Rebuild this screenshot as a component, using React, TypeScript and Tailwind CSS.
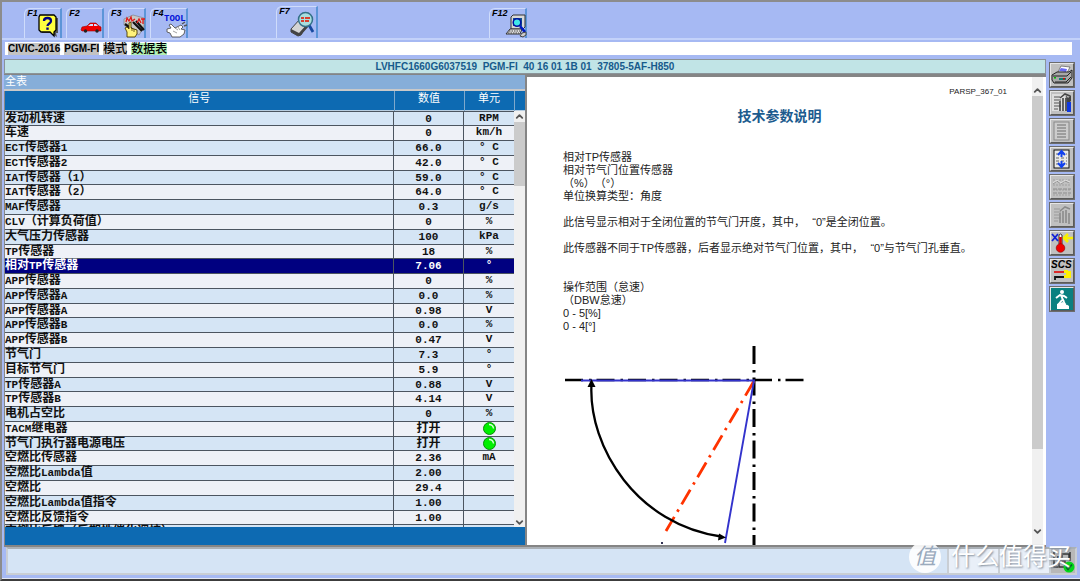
import { ReactNode } from 'react';
import clsx from 'clsx';
import { ChevronDown, ChevronUp } from 'lucide-react';

interface Signal {
    name: string;
    value: string;
    unit?: string;
    lamp?: boolean;
}

const signals: Signal[] = [
    { name: '发动机转速', value: '0', unit: 'RPM' },
    { name: '车速', value: '0', unit: 'km/h' },
    { name: 'ECT传感器1', value: '66.0', unit: '° C' },
    { name: 'ECT传感器2', value: '42.0', unit: '° C' },
    { name: 'IAT传感器（1）', value: '59.0', unit: '° C' },
    { name: 'IAT传感器（2）', value: '64.0', unit: '° C' },
    { name: 'MAF传感器', value: '0.3', unit: 'g/s' },
    { name: 'CLV（计算负荷值）', value: '0', unit: '%' },
    { name: '大气压力传感器', value: '100', unit: 'kPa' },
    { name: 'TP传感器', value: '18', unit: '%' },
    { name: '相对TP传感器', value: '7.06', unit: '°' },
    { name: 'APP传感器', value: '0', unit: '%' },
    { name: 'APP传感器A', value: '0.0', unit: '%' },
    { name: 'APP传感器A', value: '0.98', unit: 'V' },
    { name: 'APP传感器B', value: '0.0', unit: '%' },
    { name: 'APP传感器B', value: '0.47', unit: 'V' },
    { name: '节气门', value: '7.3', unit: '°' },
    { name: '目标节气门', value: '5.9', unit: '°' },
    { name: 'TP传感器A', value: '0.88', unit: 'V' },
    { name: 'TP传感器B', value: '4.14', unit: 'V' },
    { name: '电机占空比', value: '0', unit: '%' },
    { name: 'TACM继电器', value: '打开', lamp: true },
    { name: '节气门执行器电源电压', value: '打开', lamp: true },
    { name: '空燃比传感器', value: '2.36', unit: 'mA' },
    { name: '空燃比Lambda值', value: '2.00' },
    { name: '空燃比', value: '29.4' },
    { name: '空燃比Lambda值指令', value: '1.00' },
    { name: '空燃比反馈指令', value: '1.00' },
    { name: '空燃比反馈（后期性催化调校）', value: '1.00' },
];

const SELECTED = 10;

// Latin runs use a half-width face next to the full-width characters
function Mixed({ text }: { text: string }) {
    return (
        <>
            {text.split(/([A-Za-z0-9.]+)/).map((part, i) =>
                i % 2 ? (
                    <span key={i} className="font-['Liberation_Mono',monospace] text-[11px]">{part}</span>
                ) : (
                    part
                )
            )}
        </>
    );
}

/* ---------- toolbar icons ---------- */

function HelpIcon() {
    return (
        <svg width="22" height="24" viewBox="0 0 22 24">
            <path d="M4 4h16v15h-2l1 4-6-4H4z" fill="#555" />
            <path d="M2 1h14l2 2v13l-2 2v4l-4-4H3l-2-2V3z" fill="#ffff40" stroke="#000" strokeWidth="1.3" />
            <path d="M6 7c0-4 7-4 7 0 0 2.500-3.500 2.500-3.500 5" fill="none" stroke="#000080" strokeWidth="2.300" />
            <rect x="8.300" y="13.500" width="2.400" height="2.300" fill="#000080" />
        </svg>
    );
}

function CarIcon() {
    return (
        <svg width="22" height="24" viewBox="0 0 22 24">
            <path d="M1 16l1-3 5-1 3-3h6l3 3 2 1v4H2z" fill="#f00000" stroke="#900" strokeWidth=".6" />
            <path d="M8 12l2.500-2H13v2zM14 12v-2h2l2 2z" fill="#cfe0ff" />
            <circle cx="5.500" cy="17" r="1.700" fill="#222" />
            <circle cx="17" cy="17" r="1.700" fill="#222" />
        </svg>
    );
}

function DataIcon() {
    return (
        <svg width="24" height="24" viewBox="0 0 24 24">
            <path d="M2 5l9-4 11 3v9l-5 8-6-4-9-6z" fill="#c8c8c8" stroke="#777" strokeWidth=".6" />
            <path d="M3 10l8 6M11 8l9 9M14 7l8 9" stroke="#111" strokeWidth="2.200" />
            <path d="M4 8l1-4 2 3 2-4 1 4 3-2M15 9l2-4 2 4M19 5h4M21 5v5" stroke="#e01818" strokeWidth="1.300" fill="none" />
            <path d="M5 23v-5l-2-4 2-1 2 2V9l2-1v6l6 2v4l-2 3z" fill="#fff27a" stroke="#4a3a00" strokeWidth=".9" />
            <path d="M10 14v3M12 15v3" stroke="#4a3a00" strokeWidth=".8" />
        </svg>
    );
}

function ToolIcon() {
    return (
        <svg width="24" height="26" viewBox="0 0 24 26">
            <text x="0" y="9" fontSize="9" fontWeight="bold" fontFamily="Liberation Mono, monospace" fill="#0010d8">TOOL</text>
            <path d="M18 12l3-2M20 14l3-1" stroke="#555" strokeWidth="1.500" />
            <path d="M3 17l4-1-2-3 2-1 4 4 6-3 2 2-2 2 4 1-1 4-4 3H8l-2-4-3-1z" fill="#fff" stroke="#555" strokeWidth=".9" />
            <path d="M11 16l3 2M14 15l2 3M9 19l4 2" stroke="#888" strokeWidth=".8" />
        </svg>
    );
}

function InspectIcon() {
    return (
        <svg width="26" height="28" viewBox="0 0 26 28">
            <path d="M1 19l9-10 8 4-7 12-3 1-7-4z" fill="#d4d4d4" stroke="#333" strokeWidth=".9" />
            <path d="M1 19l8 4 2 2-3 1-7-4zM9 23l9-10 1 3-8 9z" fill="#444" />
            <path d="M19 15l4 7" stroke="#1848a0" strokeWidth="2.800" />
            <circle cx="15.500" cy="9.500" r="7" fill="#a8dede" stroke="#347088" strokeWidth="1.500" />
            <path d="M11 8h3M15 8h5M11 11h3M15 11h4" stroke="#d84030" strokeWidth="2" />
        </svg>
    );
}

function ComputerIcon() {
    return (
        <svg width="24" height="24" viewBox="0 0 24 24">
            <path d="M7 3l2-2h12v12l-2 2H7z" fill="#d8d8d8" stroke="#333" />
            <rect x="9" y="4" width="9" height="8" fill="#105090" />
            <path d="M2 20l4-5h12l-2 5z" fill="#e0e0e0" stroke="#333" />
            <path d="M5 17h11M4 19h11" stroke="#444" strokeDasharray="1.500 1" />
            <circle cx="13" cy="8.500" r="3.800" fill="#40e8e8" stroke="#0010a0" strokeWidth="1.500" />
            <path d="M16 12l5 6" stroke="#0018c0" strokeWidth="2.600" />
            <path d="M16 22l2-3 4-1v3l-3 2z" fill="#ccc" stroke="#444" />
        </svg>
    );
}

interface FKeyProps {
    label: string;
    name: string;
    icon: ReactNode;
    active?: boolean;
    className?: string;
}

function FKey({ label, name, icon, active, className }: FKeyProps) {
    return (
        <button
            type="button"
            aria-label={name}
            className={clsx(
                'flex justify-between rounded-tl-md border-t border-l border-[#cfdcfb] border-r-2 border-r-[#5c95d8] pl-[2px]',
                active ? 'h-8 w-[42px]' : 'h-[30px] w-[38px]',
                className
            )}
        >
            <span className="w-3 text-[9px] leading-[9px] font-bold italic">{label}</span>
            <span className="self-end">{icon}</span>
        </button>
    );
}

/* ---------- side buttons ---------- */

function Lines({ color }: { color: string }) {
    return <path d="M3 5h6M3 8h7M3 11h5M3 14h7M3 17h4" stroke={color} strokeWidth="1.200" />;
}

const sideButtons: { name: string; icon: ReactNode; disabled?: boolean }[] = [
    {
        name: '打印',
        icon: (
            <>
                <path d="M7 8l3-6 9 1-3 6z" fill="#fff" stroke="#555" strokeWidth=".7" />
                <path d="M10 4l6 1-1 3-7-1z" fill="#6a6af4" />
                <path d="M1 11l5-3h12l3-2v8l-4 5H3l-2-3z" fill="#a8a8a8" stroke="#222" />
                <path d="M2 12h14l4-4M4 18h11l5-5" fill="none" stroke="#222" />
                <path d="M8 15h7" stroke="#108070" strokeWidth="2" />
                <rect x="3" y="13" width="2" height="1.500" fill="#0b0" />
                <rect x="12" y="14" width="2" height="1.500" fill="#d00" />
            </>
        ),
    },
    {
        name: '选择',
        icon: (
            <>
                <rect x="1" y="2" width="13" height="17" fill="#dedede" />
                <Lines color="#555" />
                <path d="M9 6l5-4 5 2M9 9v10M12 6v13M15 6v13" fill="none" stroke="#444" strokeWidth="1.600" />
                <path d="M15 3l2 3 3-3v6l-2 2h-2z" fill="#444" />
                <rect x="16" y="10" width="4" height="10" fill="#1038e0" />
            </>
        ),
    },
    {
        name: '列表',
        disabled: true,
        icon: (
            <>
                <rect x="3" y="2" width="15" height="18" fill="#ccc" stroke="#888" />
                <path d="M6 5h9M6 8h9M6 11h9M6 14h9M6 17h9" stroke="#8d8d8d" strokeWidth="1.300" />
            </>
        ),
    },
    {
        name: '滚动',
        icon: (
            <>
                <rect x="3" y="2" width="15" height="18" fill="#e8e8e8" stroke="#111" />
                <path d="M5 6h11M5 10h11M5 13h11M5 16h11" stroke="#666" strokeDasharray="3 2" />
                <path d="M10.500 3v6M10.500 13v6M7 7l3.500-4L14 7M7 15l3.500 4 3.500-4" fill="none" stroke="#1040f0" strokeWidth="2" />
            </>
        ),
    },
    {
        name: '图表',
        disabled: true,
        icon: (
            <>
                <path d="M2 4h18M2 9h18M2 14h18M2 19h18" stroke="#a0a0a0" strokeDasharray="2 1" />
                <path d="M2 8l4-3 4 3 4-3 5 2M2 13h18M2 17h18" fill="none" stroke="#8c8c8c" strokeDasharray="4 1" />
                <path d="M2 7l4-3 4 3 4-3 5 2" fill="none" stroke="#e0e0e0" />
            </>
        ),
    },
    {
        name: '记录',
        disabled: true,
        icon: (
            <>
                <Lines color="#999" />
                <path d="M9 7l5-4 5 2M9 9v10M12 7v12M15 6v13M18 9v11" fill="none" stroke="#8a8a8a" strokeWidth="1.600" />
            </>
        ),
    },
    {
        name: '冻结数据',
        icon: (
            <>
                <path d="M1 2l6 7M7 2l-6 7" stroke="#1020d8" strokeWidth="1.800" />
                <path d="M12 6h10M17 2l-4 4 4 4" fill="none" stroke="#f8f000" strokeWidth="2.600" />
                <path d="M8 12V3q1.500-2 3 0v9" fill="#fff" stroke="#333" />
                <path d="M9.500 5v10" stroke="#e00000" strokeWidth="2.600" />
                <circle cx="9.500" cy="16" r="4.300" fill="#f00000" stroke="#800" strokeWidth=".6" />
            </>
        ),
    },
    {
        name: 'SCS',
        icon: (
            <>
                <text x="0" y="8" fontSize="10" fontWeight="bold" fontStyle="italic" fontFamily="Liberation Sans, sans-serif" fill="#000">SCS</text>
                <path d="M3 12h10" stroke="#e00000" strokeWidth="1.600" />
                <path d="M4 20v-3h9" fill="none" stroke="#111" strokeWidth="1.800" />
                <path d="M13 10h4v1h3v7h-7v-3h2v-2h-2z" fill="#fff000" />
            </>
        ),
    },
    {
        name: '退出',
        icon: (
            <>
                <rect width="22" height="22" fill="#0a8080" />
                <path d="M6 20V16l6-2 6 4v3H6z" fill="#fff" />
                <circle cx="11" cy="4" r="2" fill="#fff" />
                <path d="M10 7l2 5 3 5M11 12l-4 5M5 10l4-3 4 1 3 2" fill="none" stroke="#fff" strokeWidth="2" />
                <path d="M14 13l2 4" stroke="#0a8080" />
            </>
        ),
    },
];

/* ---------- panels ---------- */

function ScrollBar({ thumb, className }: { thumb: string; className?: string }) {
    return (
        <div className={clsx('flex w-[11px] shrink-0 flex-col bg-[#f0f0f0] text-[#555]', className)}>
            <ChevronUp size={11} strokeWidth={4} />
            <div className="min-h-0 flex-1">
                <div className={clsx('w-full bg-[#cbcbcb]', thumb)} />
            </div>
            <ChevronDown size={11} strokeWidth={4} />
        </div>
    );
}

function Lamp() {
    return (
        <svg className="mx-auto block" width="13" height="13" viewBox="0 0 13 13" role="img" aria-label="打开">
            <circle cx="6.500" cy="6.500" r="6" fill="#00f000" stroke="#0a8a0a" />
            <path d="M6 2.500q4 0 4.500 4" fill="none" stroke="#d8ffd8" strokeWidth="1.300" />
        </svg>
    );
}

function SignalPanel() {
    return (
        <section className="flex min-h-0 min-w-0 flex-col">
            <h2 className="h-4 border-b-2 border-[#c9c9c9] bg-[#86aed9] pl-px text-[11px] leading-[13px] text-white">全表</h2>
            <div className="flex min-h-0 flex-1 flex-col border-l border-[#888]">
                <div className="min-h-0 flex-1 overflow-hidden bg-[#0d6ab2]">
                    <table className="w-full table-fixed border-collapse">
                        <colgroup>
                            <col />
                            <col className="w-[70px]" />
                            <col className="w-[50px]" />
                            <col className="w-[11px]" />
                        </colgroup>
                        <thead>
                            <tr className="h-[19px] border-b border-[#b8cde0] align-top text-[11px] leading-[14px] text-white">
                                <th className="border-r border-[#7fa9cc] font-normal">信号</th>
                                <th className="border-r border-[#7fa9cc] font-normal">数值</th>
                                <th className="border-r border-[#7fa9cc] font-normal">单元</th>
                                <td />
                            </tr>
                        </thead>
                    </table>
                    <div className="flex h-full pb-[19px]">
                        <div className="min-w-0 flex-1 overflow-hidden">
                            <table className="h-[429px] w-full table-fixed border-separate border-spacing-0 font-bold">
                                <colgroup>
                                    <col />
                                    <col className="w-[70px]" />
                                    <col className="w-[50px]" />
                                </colgroup>
                                <tbody>
                                    {signals.map((s, i) => (
                                        <tr
                                            key={i}
                                            className={clsx(
                                                'align-top text-[12px] leading-[12px] whitespace-nowrap',
                                                i === SELECTED ? 'bg-[#000080] text-white' : i % 2 ? 'bg-[#eef1f7] text-[#111]' : 'bg-[#d5e5f5] text-[#111]'
                                            )}
                                        >
                                            <td className="border-t border-r border-[#4c5560] p-0">
                                                <div className="h-[13px]">
                                                    <Mixed text={s.name} />
                                                </div>
                                            </td>
                                            <td className="border-t border-r border-[#4c5560] p-0 text-center">
                                                <div className="h-[13px]">
                                                    <Mixed text={s.value} />
                                                </div>
                                            </td>
                                            <td className="border-t border-[#4c5560] p-0 text-center font-['Liberation_Mono',monospace] text-[11px]">
                                                <div className="h-[13px]">{s.lamp ? <Lamp /> : s.unit}</div>
                                            </td>
                                        </tr>
                                    ))}
                                </tbody>
                            </table>
                        </div>
                        <ScrollBar thumb="h-[64px]" />
                    </div>
                </div>
                <div className="h-[18px] bg-[#0d6ab2]" />
            </div>
        </section>
    );
}

function AngleDiagram() {
    return (
        <svg className="mt-[10px] block shrink-0" width="250" height="203" viewBox="0 0 250 203" fill="none">
            <path d="M2 37H242" stroke="#000" strokeWidth="2.600" strokeDasharray="18 6 2.500 5" />
            <path d="M191 3V203" stroke="#000" strokeWidth="3" strokeDasharray="18 6 2.500 5" />
            <path d="M191 38L103 188" stroke="#ff3300" strokeWidth="2.800" strokeDasharray="17 6 2.500 6" />
            <path d="M18 37.500H191L162 200" stroke="#3333cc" strokeWidth="1.900" />
            <path d="M28.500 41C25 105 75 182 158 193.500" stroke="#000" strokeWidth="2.300" />
            <path d="M28.500 36l4 8h-8zM163 194.500l-8 3 1-7z" fill="#000" />
            <rect x="98" y="199" width="2" height="2" fill="#335" />
        </svg>
    );
}

function Quote() {
    return <span className="inline-block w-[11px] text-right leading-none">“</span>;
}

function DocPanel() {
    return (
        <section className="flex min-h-0 min-w-0 border-t-2 border-l-2 border-[#858585] bg-white">
            <article className="flex min-w-0 flex-1 flex-col overflow-hidden pl-9 text-[11px] leading-[13px] text-[#222] [text-spacing-trim:space-all]">
                <p className="mt-2 pr-[25px] text-right text-[8px]">PARSP_367_01</p>
                <h1 className="mt-[9px] pr-9 text-center text-[14px] leading-[18px] font-bold text-[#1c5b8e]">技术参数说明</h1>
                <p className="mt-[26px]">相对TP传感器</p>
                <p>相对节气门位置传感器</p>
                <p>（%）（°）</p>
                <p>单位换算类型：角度</p>
                <p className="mt-[13px] whitespace-nowrap">此信号显示相对于全闭位置的节气门开度，其中，<Quote />0”是全闭位置。</p>
                <p className="mt-[13px] whitespace-nowrap">此传感器不同于TP传感器，后者显示绝对节气门位置，其中，<Quote />0”与节气门孔垂直。</p>
                <p className="mt-[26px]">操作范围（怠速）</p>
                <p>（DBW怠速）</p>
                <p>0 - 5[%]</p>
                <p>0 - 4[°]</p>
                <AngleDiagram />
            </article>
            <ScrollBar thumb="h-[82%]" className="mr-[3px] pt-2 pb-2" />
        </section>
    );
}

function StatusBar() {
    return (
        <footer className="relative mr-[3px] ml-1 flex h-7 shrink-0 gap-[2px] border-2 border-[#c9ced4] border-t-[#aab0b6] bg-[#c9ced4]">
            <div className="flex-1 bg-[#d5e4f5]" />
            <div className="w-[49px] bg-[#e9eff8]" />
            <div className="w-[49px] bg-[#e9eff8]" />
            <div className="w-6 bg-[#b8b8b8]">
                <svg width="24" height="24" viewBox="0 0 24 24" fill="none">
                    <path d="M3 3v15h4M6 8h5V4M19 3v9M8 12h6v6H8zM12 5h6v4" stroke="#333" strokeWidth="1.500" />
                    <circle cx="18" cy="18" r="5.500" fill="#00d818" />
                    <path d="M15 18l2 2.500 4-5" stroke="#062" strokeWidth="1.600" />
                </svg>
            </div>
            <div className="absolute right-1 bottom-0 flex items-center gap-[10px] text-white">
                <span className="flex size-8 items-center justify-center rounded-full bg-white/90 text-[22px] leading-8 text-[#9aaabd] italic">值</span>
                <span className="text-[24px] leading-8 [text-shadow:1px_1px_2px_#7f8b99]">什么值得买</span>
            </div>
        </footer>
    );
}

export default function App() {
    return (
        <div
            lang="zh-CN"
            className="flex h-screen flex-col overflow-hidden border-t-2 border-b-2 border-l-2 border-[#8c8c8c] border-b-[#3c3c3c] bg-[#a6b9f3] font-['Liberation_Sans','Noto_Sans_CJK_SC',sans-serif] text-black"
        >
            <nav className="flex h-[38px] shrink-0 items-end gap-1 border-b-2 border-[#c3d2fa] pl-[22px]">
                <FKey label="F1" name="帮助" icon={<HelpIcon />} />
                <FKey label="F2" name="车辆" icon={<CarIcon />} />
                <FKey label="F3" name="数据" icon={<DataIcon />} />
                <FKey label="F4" name="工具" icon={<ToolIcon />} />
                <FKey label="F7" name="检查" icon={<InspectIcon />} active className="ml-[84px]" />
                <FKey label="F12" name="系统" icon={<ComputerIcon />} className="ml-[167px]" />
            </nav>

            <div className="mt-[2px] mr-2 ml-[3px] flex h-[13px] shrink-0 items-center gap-1 bg-white pl-[3px] text-[10px] leading-[12px]">
                <span className="bg-[#c3c3c3] font-bold">CIVIC-2016</span>
                <span className="bg-[#c3c3c3] font-bold">PGM-FI</span>
                <span className="bg-[#c3c3c3] text-[12px] font-medium">模式</span>
                <span className="bg-[#b2f0b4] text-[12px] font-medium">数据表</span>
            </div>

            <div className="mt-1 flex min-h-0 flex-1">
                <main className="ml-[2px] flex min-w-0 flex-1 flex-col">
                    <div className="h-[15px] shrink-0 border border-[#8a9499] bg-[#c1e4e6] text-center text-[10px] leading-[13px] font-bold whitespace-pre text-[#175a8c]">
                        LVHFC1660G6037519  PGM-FI  40 16 01 1B 01  37805-5AF-H850
                    </div>
                    <div className="grid min-h-0 flex-1 grid-cols-2 border-t border-b-2 border-[#858585]">
                        <SignalPanel />
                        <DocPanel />
                    </div>
                </main>
                <aside className="flex w-[34px] flex-col gap-[2px] pt-[3px] pl-[3px]">
                    {sideButtons.map((b) => (
                        <button
                            key={b.name}
                            type="button"
                            aria-label={b.name}
                            disabled={b.disabled}
                            className="flex size-[26px] items-center justify-center border-2 border-[#e6e6e6] border-r-[#5a5a5a] border-b-[#5a5a5a] bg-[#c0c0c0] outline-1 -outline-offset-1 outline-[#6c6c6c]"
                        >
                            <svg width="22" height="22" viewBox="0 0 22 22" fill="none">{b.icon}</svg>
                        </button>
                    ))}
                </aside>
            </div>

            <StatusBar />
            <div className="h-1 shrink-0 border-b border-[#e4e8f4]" />
        </div>
    );
}
